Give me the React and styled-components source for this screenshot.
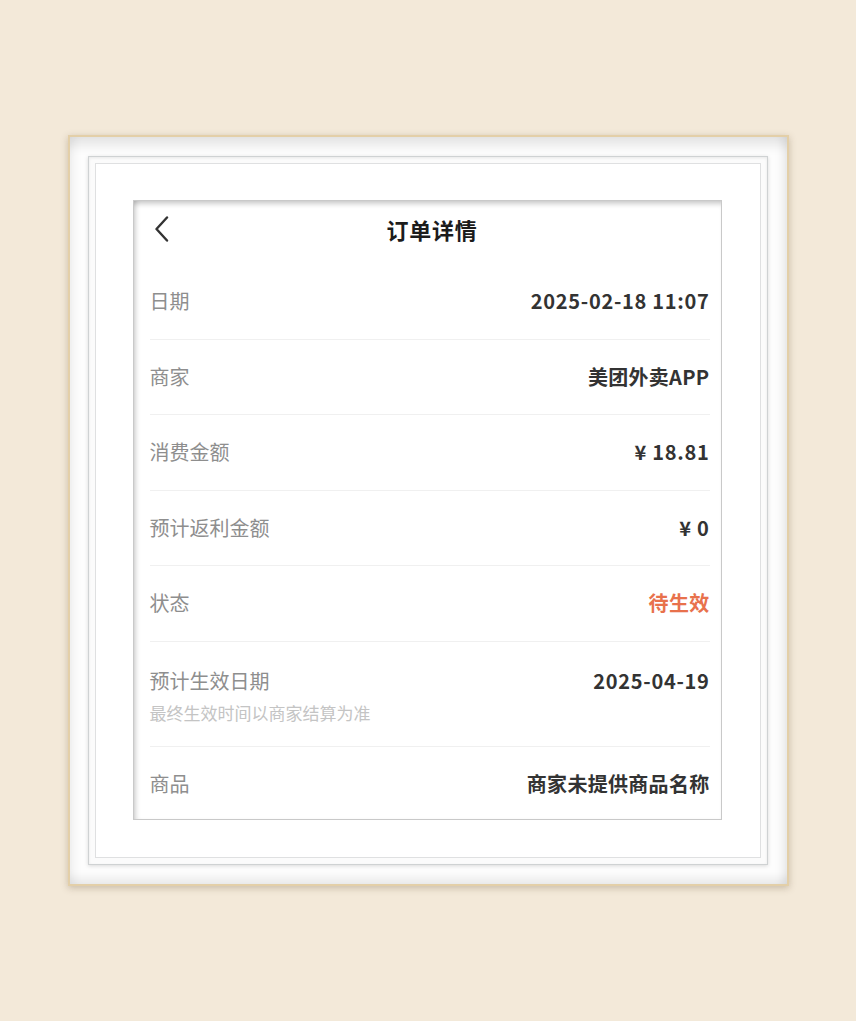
import React from "react";
import styled, { createGlobalStyle } from "styled-components";

const Global = createGlobalStyle`
  html, body { margin: 0; padding: 0; }
  body {
    background: #f3e9d9;
    font-family: "Noto Sans CJK SC", "Noto Sans", sans-serif;
  }
  * { box-sizing: border-box; }
`;

const Page = styled.div`
  min-height: 100vh;
  display: flex;
  align-items: center;
  justify-content: center;
`;

const Frame = styled.div`
  width: 721px;
  height: 751px;
  border: 2px solid #e3cfa8;
  background: #fdfdfd;
  padding: 19px 19px 19px 18px;
  box-shadow: 0 2px 7px rgba(90, 70, 40, 0.28),
    inset 0 16px 12px -8px rgba(0, 0, 0, 0.1),
    inset 10px 0 10px -6px rgba(0, 0, 0, 0.06),
    inset -10px 0 10px -6px rgba(0, 0, 0, 0.09),
    inset 0 -12px 10px -6px rgba(0, 0, 0, 0.08);
`;

const Matte = styled.div`
  height: 100%;
  border: 1px solid #cfd2d3;
  background: #fbfbfb;
  padding: 6px;
  box-shadow: 0 1px 4px rgba(0, 0, 0, 0.14), inset 0 1px 3px rgba(0, 0, 0, 0.08);
`;

const Board = styled.div`
  height: 100%;
  border: 1px solid #dfe0e1;
  background: #ffffff;
  padding: 36px 38px 37px 37px;
`;

const Screen = styled.div`
  width: 589px;
  height: 620px;
  border: 1px solid #c9c9c9;
  overflow: hidden;
  background: #fff;
  position: relative;
  box-shadow: inset 0 6px 5px -3px rgba(0, 0, 0, 0.2),
    inset 5px 0 5px -3px rgba(0, 0, 0, 0.18);
`;

const Header = styled.div`
  height: 63px;
  display: flex;
  align-items: center;
  justify-content: center;
  position: relative;
  padding: 0 12px 8px 17px;
`;

const Back = styled.div`
  position: absolute;
  left: 20px;
  top: 15px;
  width: 18px;
  height: 26px;
  display: flex;
  align-items: center;
`;

const Title = styled.div`
  font-size: 22px;
  font-weight: 700;
  color: #1c1c1c;
  letter-spacing: 0.8px;
  margin-left: 5px;
`;

const List = styled.div`
  padding: 0 11px 0 16px;
`;

const Row = styled.div`
  display: flex;
  justify-content: space-between;
  align-items: ${(p) => (p.$tall ? "flex-start" : "center")};
  height: ${(p) => (p.$tall ? "105px" : "75.5px")};
  padding-top: ${(p) => (p.$tall ? "27px" : "0")};
  border-bottom: 1px solid #f0f0f0;
  &:last-child { border-bottom: none; }
`;

const LabelCol = styled.div`
  display: flex;
  flex-direction: column;
  gap: 8px;
`;

const Label = styled.div`
  font-size: 20px;
  line-height: 24px;
  color: #8e8e8e;
`;

const Sub = styled.div`
  font-size: 17px;
  line-height: 24px;
  color: #c4c4c4;
`;

const Value = styled.div`
  font-size: 20px;
  line-height: 24px;
  font-weight: 700;
  letter-spacing: ${(p) => (p.$num ? "0.7px" : "0.3px")};
  color: ${(p) => p.$color || "#333333"};
`;

const rows = [
  { label: "日期", value: "2025-02-18 11:07", num: true },
  { label: "商家", value: "美团外卖APP" },
  { label: "消费金额", value: "¥ 18.81", num: true },
  { label: "预计返利金额", value: "¥ 0", num: true },
  { label: "状态", value: "待生效", color: "#e8714c" },
  { label: "预计生效日期", value: "2025-04-19", num: true, sub: "最终生效时间以商家结算为准" },
  { label: "商品", value: "商家未提供商品名称" },
];

export default function App() {
  return (
    <Page>
      <Global />
      <Frame>
        <Matte>
          <Board>
            <Screen>
              <Header>
                <Back>
                  <svg width="16" height="26" viewBox="0 0 16 26" fill="none">
                    <path d="M13 1.5 L2.5 13 L13 24.5" stroke="#333" strokeWidth="2.4" strokeLinecap="round" strokeLinejoin="round" />
                  </svg>
                </Back>
                <Title>订单详情</Title>
              </Header>
              <List>
                {rows.map((r) => (
                  <Row key={r.label} $tall={!!r.sub}>
                    <LabelCol>
                      <Label>{r.label}</Label>
                      {r.sub && <Sub>{r.sub}</Sub>}
                    </LabelCol>
                    <Value $color={r.color} $num={r.num}>{r.value}</Value>
                  </Row>
                ))}
              </List>
            </Screen>
          </Board>
        </Matte>
      </Frame>
    </Page>
  );
}
